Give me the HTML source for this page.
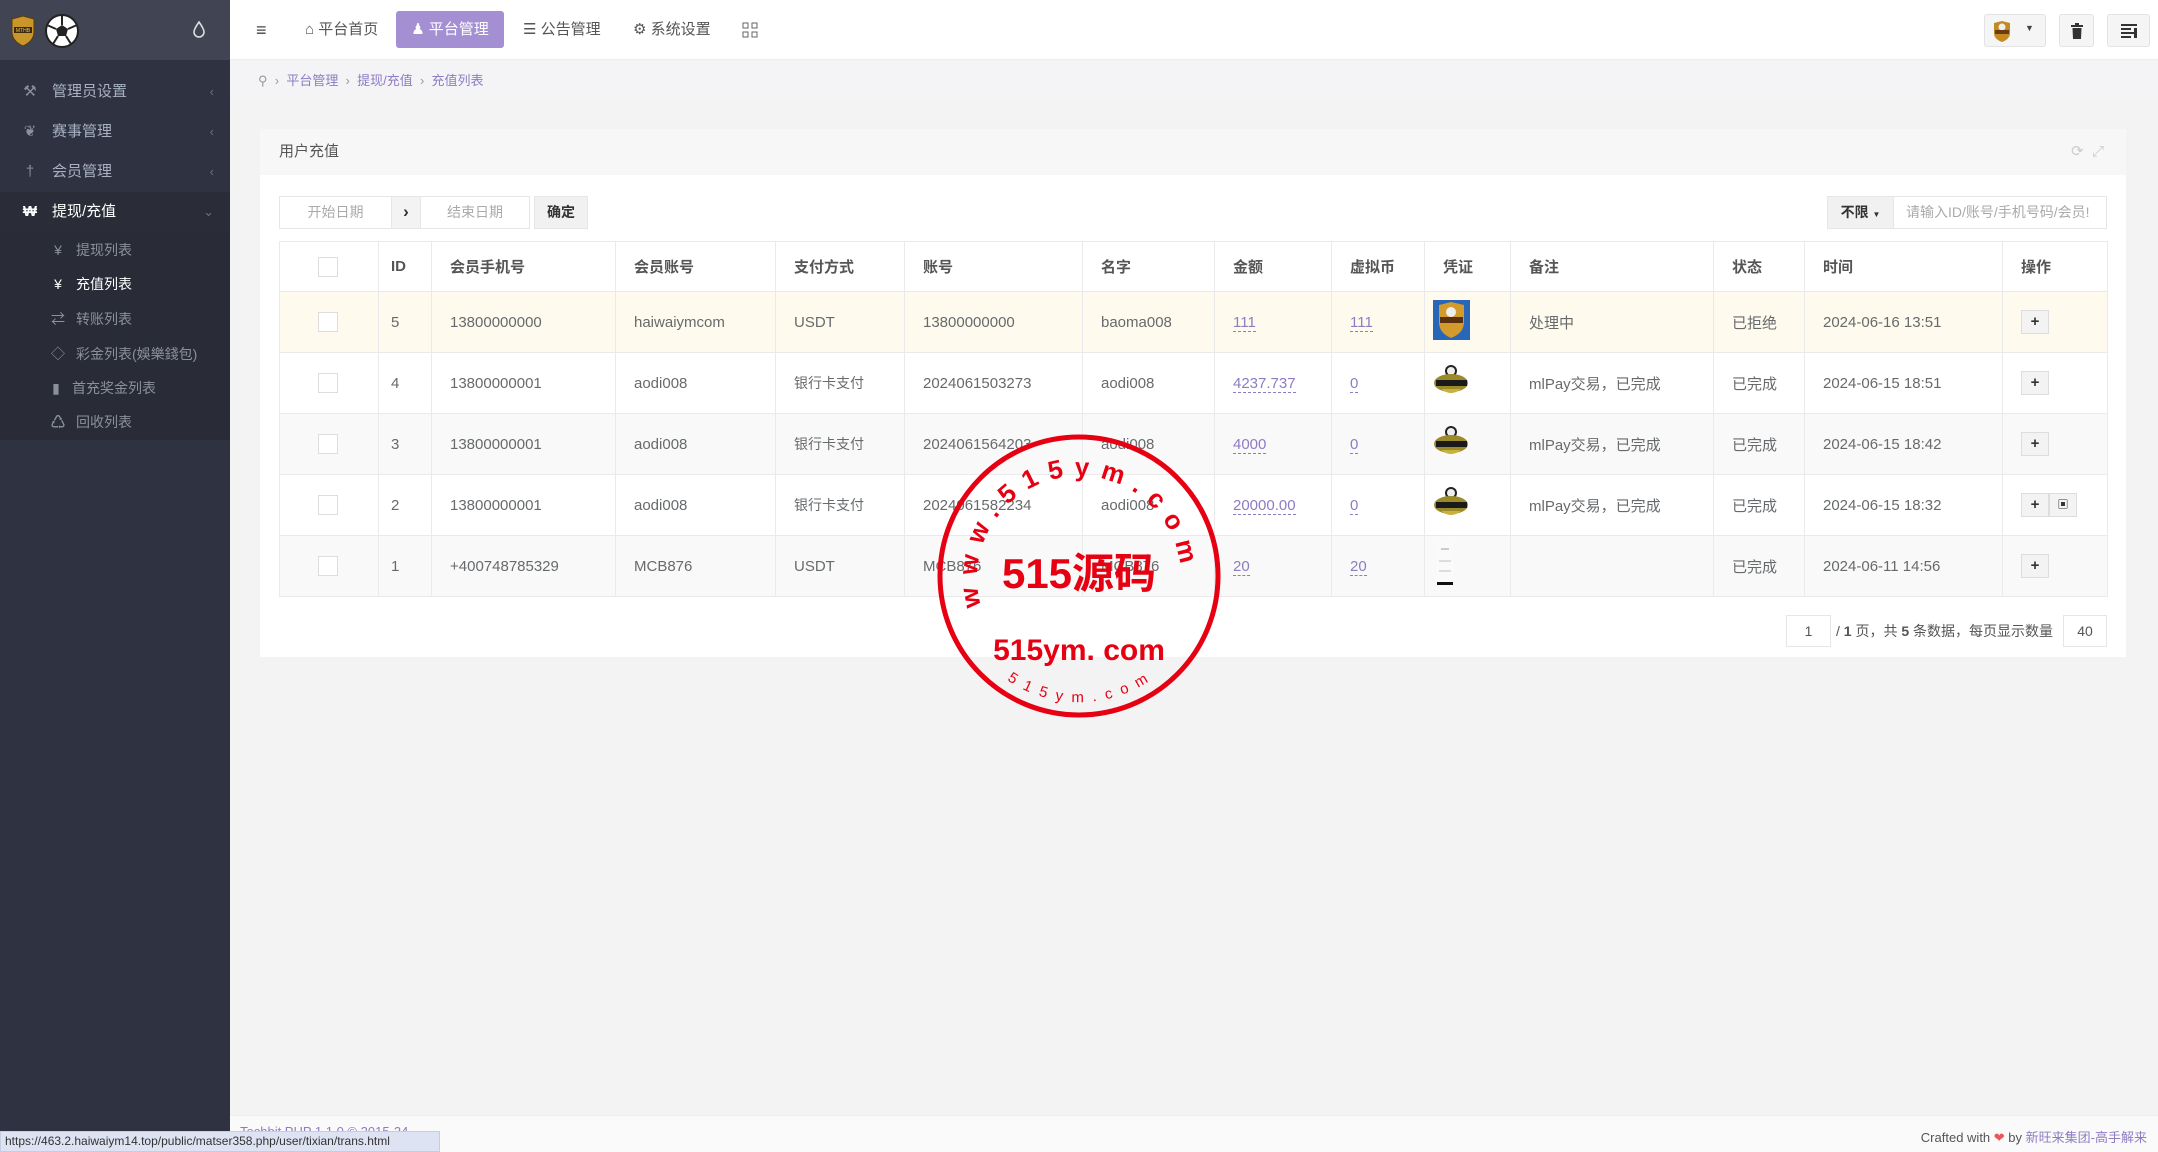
<!DOCTYPE html>
<html><head><meta charset="utf-8">
<style>
*{box-sizing:border-box;margin:0;padding:0}
body{width:2158px;height:1152px;overflow:hidden;background:#f3f3f4;font-family:"Liberation Sans","Noto Sans CJK SC",sans-serif;color:#676a6c;font-size:15px;position:relative}
.side{position:absolute;left:0;top:0;width:230px;height:1152px;background:#2f3241}
.logo{height:60px;background:#414452;position:relative}
.mi{position:absolute;left:0;width:230px;height:40px;line-height:40px;color:#a7b1c2;font-size:15px;padding-left:52px}
.mi .ic{position:absolute;left:20px;top:0;width:20px;text-align:center;color:#8a909c}
.mi .ar{position:absolute;right:16px;top:0;font-size:13px;color:#6a7080}
.sub{position:absolute;left:0;top:232px;width:230px;height:208px;background:#292b37}
.si{position:absolute;left:0;width:230px;height:34px;line-height:34px;color:#8a909c;font-size:14px;padding-left:76px}
.si .ic{position:absolute;left:50px;width:16px;text-align:center}
.top{position:absolute;left:230px;top:0;right:0;height:60px;background:#fff;border-bottom:1px solid #eee}
.nav{position:absolute;top:0;height:60px;line-height:60px;font-size:15px;color:#555}
.act{position:absolute;left:396px;top:11px;width:108px;height:37px;background:#a48fd3;color:#fff;border-radius:3px;font-size:15px;line-height:37px;text-align:center}
.rb{position:absolute;top:14px;height:33px;border:1px solid #e3e3e3;background:#f5f5f5;border-radius:3px}
.bc{position:absolute;left:258px;top:70px;font-size:13px;color:#999}
.bc a{color:#8e7cc3;text-decoration:none}
.panel{position:absolute;left:260px;top:129px;width:1866px;height:528px;background:#fff}
.ph{height:46px;background:#f7f7f7;padding-left:19px;line-height:46px;font-size:15px;color:#555}
.box{position:absolute;border:1px solid #e5e6e7;background:#fff;font-size:14px;color:#aaa;text-align:center;line-height:30px}
table{position:absolute;left:279px;top:241px;border-collapse:collapse;table-layout:fixed;width:1828px;font-size:15px}
td,th{border:1px solid #eaeaea;padding:0 0 0 18px;text-align:left;white-space:nowrap;overflow:hidden}
th{height:50px;font-weight:bold;color:#555;font-size:15px}
td{height:61px;color:#676a6c}
tr.y td{background:#fefbee}
tr.g td{background:#f9f9f9}
.cb{display:inline-block;width:20px;height:20px;border:1px solid #ddd;background:#fff;margin-left:38px;vertical-align:middle}
.lk{color:#8e7cc3;border-bottom:1px dashed #8e7cc3}
.bt{display:inline-block;width:28px;height:24px;border:1px solid #ddd;background:#f3f3f3;text-align:center;line-height:22px;font-weight:bold;color:#333;font-size:15px;vertical-align:middle}
.foot{position:absolute;left:230px;top:1115px;right:0;height:37px;background:#fafafa;border-top:1px solid #eee}
</style></head><body>
<div class="side">
 <div class="logo">
  <svg style="position:absolute;left:10px;top:16px" width="26" height="30" viewBox="0 0 26 30"><path d="M2 3 L13 0 L24 3 L24 16 Q24 25 13 30 Q2 25 2 16Z" fill="#c9962a" stroke="#5a3a10"/><rect x="4" y="11" width="18" height="6" fill="#3a2a10"/><text x="13" y="16" font-size="5" fill="#f2c84b" text-anchor="middle" font-family="Liberation Sans">MTHB</text></svg>
  <svg style="position:absolute;left:44px;top:13px" width="36" height="36" viewBox="0 0 36 36"><circle cx="18" cy="18" r="16" fill="#fff" stroke="#222" stroke-width="2"/><polygon points="18,12 24,16 22,23 14,23 12,16" fill="#222"/><path d="M18 2 L18 12 M12 16 L3 12 M24 16 L33 12 M14 23 L9 31 M22 23 L27 31" stroke="#222" stroke-width="2"/></svg>
  <svg style="position:absolute;left:193px;top:21px" width="12" height="17" viewBox="0 0 12 17"><path d="M6 1 Q1 8 1 11 A5 5 0 0 0 11 11 Q11 8 6 1Z" fill="none" stroke="#ddd" stroke-width="1.6"/></svg>
 </div>
 <div class="mi" style="top:72px"><span class="ic">&#x2692;</span>管理员设置<span class="ar">&lsaquo;</span></div>
 <div class="mi" style="top:112px"><span class="ic">&#x2766;</span>赛事管理<span class="ar">&lsaquo;</span></div>
 <div class="mi" style="top:152px"><span class="ic">&#x2020;</span>会员管理<span class="ar">&lsaquo;</span></div>
 <div class="mi" style="top:192px;background:#2a2c38;color:#fff"><span class="ic" style="color:#fff;font-weight:bold">&#x20A9;</span>提现/充值<span class="ar">&#x2304;</span></div>
 <div class="sub">
  <div class="si" style="top:1px"><span class="ic">¥</span>提现列表</div>
  <div class="si" style="top:35px;color:#fff"><span class="ic">¥</span>充值列表</div>
  <div class="si" style="top:70px"><span class="ic">&#x21C4;</span>转账列表</div>
  <div class="si" style="top:105px"><span class="ic">&#x25C7;</span>彩金列表(娛樂錢包)</div>
  <div class="si" style="top:139px;padding-left:72px"><span class="ic" style="left:48px">&#x25AE;</span>首充奖金列表</div>
  <div class="si" style="top:173px"><span class="ic">&#x267A;</span>回收列表</div>
 </div>
</div>
<div class="top">
 <div class="nav" style="left:26px;font-size:18px;color:#444">&#x2261;</div>
 <div class="nav" style="left:75px">&#x2302; 平台首页</div>
 <div class="act" style="left:166px">&#x265F; 平台管理</div>
 <div class="nav" style="left:293px">&#x2630; 公告管理</div>
 <div class="nav" style="left:403px">&#x2699; 系统设置</div>
 <svg style="position:absolute;left:512px;top:22px" width="16" height="16"><rect x="1" y="1" width="5" height="5" fill="none" stroke="#666"/><rect x="10" y="1" width="5" height="5" fill="none" stroke="#666"/><rect x="1" y="10" width="5" height="5" fill="none" stroke="#666"/><rect x="10" y="10" width="5" height="5" fill="none" stroke="#666"/></svg>
 <div class="rb" style="left:1754px;width:62px"><svg style="position:absolute;left:6px;top:5px" width="22" height="22" viewBox="0 0 22 22"><path d="M3 3 L11 1 L19 3 L19 13 Q19 19 11 22 Q3 19 3 13Z" fill="#c48a22"/><circle cx="11" cy="7" r="3.5" fill="#eee"/><rect x="4" y="10" width="14" height="4" fill="#6b3c10"/></svg><span style="position:absolute;left:40px;top:8px;font-size:9px;color:#444">&#x25BC;</span></div>
 <div class="rb" style="left:1829px;width:35px"><svg style="position:absolute;left:11px;top:8px" width="12" height="16"><rect x="0" y="2" width="12" height="2" fill="#333"/><rect x="4" y="0" width="4" height="2" fill="#333"/><path d="M1.5 5 L10.5 5 L10 16 L2 16Z" fill="#333"/></svg></div>
 <div class="rb" style="left:1877px;width:43px"><svg style="position:absolute;left:13px;top:9px" width="16" height="14"><rect x="0" y="0" width="16" height="2" fill="#333"/><rect x="0" y="4" width="10" height="2" fill="#333"/><rect x="0" y="8" width="16" height="2" fill="#333"/><rect x="0" y="12" width="10" height="2" fill="#333"/><rect x="13" y="4" width="3" height="10" fill="#333"/></svg></div>
</div>
<div style="position:absolute;left:230px;top:61px;right:0;height:38px;background:#f4f4f6"></div>
<div class="bc">&#x26B2; &nbsp;&rsaquo;&nbsp; <a>平台管理</a> &nbsp;&rsaquo;&nbsp; <a>提现/充值</a> &nbsp;&rsaquo;&nbsp; <a>充值列表</a></div>
<div class="panel">
 <div class="ph">用户充值<span style="position:absolute;right:22px;top:0;color:#ccc;font-size:15px">&#x27F3; &nbsp;&#x2922;</span></div>
</div>
<div class="box" style="left:279px;top:196px;width:113px;height:33px">开始日期</div>
<div class="box" style="left:391px;top:196px;width:30px;height:33px;background:#f3f3f3;color:#333;font-weight:bold;font-size:17px">&rsaquo;</div>
<div class="box" style="left:420px;top:196px;width:110px;height:33px">结束日期</div>
<div class="box" style="left:534px;top:196px;width:54px;height:33px;background:#f1f1f1;color:#333;font-weight:bold">确定</div>
<div class="box" style="left:1827px;top:196px;width:67px;height:33px;background:#f1f1f1;color:#333;font-weight:bold">不限 <span style="font-size:8px">&#x25BC;</span></div>
<div class="box" style="left:1893px;top:196px;width:214px;height:33px;text-align:left;padding-left:12px;color:#aaa">请输入ID/账号/手机号码/会员!</div>
<table>
<colgroup><col style="width:99px"><col style="width:53px"><col style="width:184px"><col style="width:160px"><col style="width:129px"><col style="width:178px"><col style="width:132px"><col style="width:117px"><col style="width:93px"><col style="width:86px"><col style="width:203px"><col style="width:91px"><col style="width:198px"><col style="width:105px"></colgroup>
<tr><th style="padding:0"><span class="cb"></span></th><th style="padding-left:12px">ID</th><th>会员手机号</th><th>会员账号</th><th>支付方式</th><th>账号</th><th>名字</th><th>金额</th><th>虚拟币</th><th>凭证</th><th>备注</th><th>状态</th><th>时间</th><th>操作</th></tr>
<tr class="y"><td style="padding:0"><span class="cb"></span></td><td style="padding-left:12px">5</td><td>13800000000</td><td>haiwaiymcom</td><td>USDT</td><td>13800000000</td><td>baoma008</td><td><span class="lk">111</span></td><td><span class="lk">111</span></td><td style="padding-left:8px"><svg width="37" height="40" viewBox="0 0 37 40"><rect width="37" height="40" fill="#2a66b8"/><path d="M6 5 L18 2 L31 5 L31 22 Q31 33 18 38 Q6 33 6 22Z" fill="#d39a2c"/><circle cx="18" cy="12" r="5" fill="#eee"/><rect x="7" y="17" width="23" height="6" fill="#5a3010"/></svg></td><td>处理中</td><td>已拒绝</td><td>2024-06-16 13:51</td><td><span class="bt">+</span></td></tr>
<tr><td style="padding:0"><span class="cb"></span></td><td style="padding-left:12px">4</td><td>13800000001</td><td>aodi008</td><td style="font-size:14px">银行卡支付</td><td>2024061503273</td><td>aodi008</td><td><span class="lk">4237.737</span></td><td><span class="lk">0</span></td><td style="padding-left:8px"><svg width="37" height="40" viewBox="0 0 37 40"><circle cx="18" cy="10" r="6" fill="#222"/><circle cx="18" cy="10" r="4" fill="#eee"/><ellipse cx="18" cy="22" rx="17" ry="9" fill="#9a8a2a"/><rect x="3" y="19" width="31" height="6" fill="#1a1a1a"/><path d="M8 28 Q18 36 28 28" fill="#c9b23a"/></svg></td><td>mlPay交易，已完成</td><td>已完成</td><td>2024-06-15 18:51</td><td><span class="bt">+</span></td></tr>
<tr class="g"><td style="padding:0"><span class="cb"></span></td><td style="padding-left:12px">3</td><td>13800000001</td><td>aodi008</td><td style="font-size:14px">银行卡支付</td><td>2024061564203</td><td>aodi008</td><td><span class="lk">4000</span></td><td><span class="lk">0</span></td><td style="padding-left:8px"><svg width="37" height="40" viewBox="0 0 37 40"><circle cx="18" cy="10" r="6" fill="#222"/><circle cx="18" cy="10" r="4" fill="#eee"/><ellipse cx="18" cy="22" rx="17" ry="9" fill="#9a8a2a"/><rect x="3" y="19" width="31" height="6" fill="#1a1a1a"/><path d="M8 28 Q18 36 28 28" fill="#c9b23a"/></svg></td><td>mlPay交易，已完成</td><td>已完成</td><td>2024-06-15 18:42</td><td><span class="bt">+</span></td></tr>
<tr><td style="padding:0"><span class="cb"></span></td><td style="padding-left:12px">2</td><td>13800000001</td><td>aodi008</td><td style="font-size:14px">银行卡支付</td><td>2024061582234</td><td>aodi008</td><td><span class="lk">20000.00</span></td><td><span class="lk">0</span></td><td style="padding-left:8px"><svg width="37" height="40" viewBox="0 0 37 40"><circle cx="18" cy="10" r="6" fill="#222"/><circle cx="18" cy="10" r="4" fill="#eee"/><ellipse cx="18" cy="22" rx="17" ry="9" fill="#9a8a2a"/><rect x="3" y="19" width="31" height="6" fill="#1a1a1a"/><path d="M8 28 Q18 36 28 28" fill="#c9b23a"/></svg></td><td>mlPay交易，已完成</td><td>已完成</td><td>2024-06-15 18:32</td><td><span class="bt">+</span><span class="bt" style="font-size:11px">&#x25A3;</span></td></tr>
<tr class="g"><td style="padding:0"><span class="cb"></span></td><td style="padding-left:12px">1</td><td>+400748785329</td><td>MCB876</td><td>USDT</td><td>MCB876</td><td>MCB876</td><td><span class="lk">20</span></td><td><span class="lk">20</span></td><td style="padding-left:10px"><svg width="20" height="44" viewBox="0 0 20 44"><rect x="2" y="0" width="16" height="42" fill="#fafafa"/><rect x="6" y="6" width="8" height="2" fill="#ccc"/><rect x="4" y="18" width="12" height="2" fill="#ddd"/><rect x="4" y="28" width="12" height="2" fill="#ddd"/><rect x="2" y="40" width="16" height="3" fill="#111"/></svg></td><td></td><td>已完成</td><td>2024-06-11 14:56</td><td><span class="bt">+</span></td></tr>
</table>
<div class="box" style="left:1786px;top:615px;width:45px;height:32px;color:#555;line-height:30px">1</div>
<div style="position:absolute;left:1836px;top:621px;font-size:14px;color:#555">/ <b>1</b> 页，共 <b>5</b> 条数据，每页显示数量</div>
<div class="box" style="left:2063px;top:615px;width:44px;height:32px;color:#555;line-height:30px">40</div>
<div class="foot">
 <div style="position:absolute;left:10px;top:8px;font-size:13px;color:#8e7cc3">Techbit PHP 1.1.0 © 2015-24</div>
 <div style="position:absolute;right:11px;top:11px;font-size:13px;color:#555">Crafted with <span style="color:#e55">&#x2764;</span> by <span style="color:#8e7cc3">新旺来集团-高手解来</span></div>
</div>
<div style="position:absolute;left:0;top:1131px;width:440px;height:21px;background:#dee3f3;border:1px solid #c6cde0;font-size:12px;color:#333;line-height:19px;padding-left:4px">https://463.2.haiwaiym14.top/public/matser358.php/user/tixian/trans.html</div>
<svg style="position:absolute;left:929px;top:426px" width="300" height="300" viewBox="-150 -150 300 300">
 <defs>
  <path id="arcT" d="M -100 -8 A 100 100 0 0 1 100 -8" transform="rotate(0)"/>
  <path id="arcT2" d="M -98 30 A 102 102 0 1 1 102 -2"/>
  <path id="arcB" d="M -72 104 A 128 128 0 0 0 72 104"/>
 </defs>
 <circle r="139" fill="none" stroke="#e60012" stroke-width="5"/>
 <text font-family="Liberation Sans,sans-serif" font-weight="bold" font-size="26" fill="#e60012" textLength="335" lengthAdjust="spacing"><textPath href="#arcT2" textLength="335" lengthAdjust="spacing">www.515ym.com</textPath></text>
 <text x="0" y="12" text-anchor="middle" font-family="Liberation Sans,'Noto Sans CJK SC',sans-serif" font-weight="bold" font-size="42" fill="#e60012">515源码</text>
 <text x="0" y="84" text-anchor="middle" font-family="Liberation Sans,sans-serif" font-weight="bold" font-size="30" fill="#e60012">515ym. com</text>
 <text font-family="Liberation Sans,sans-serif" font-size="15" fill="#e60012"><textPath href="#arcB" textLength="150" lengthAdjust="spacing">515ym.com</textPath></text>
</svg>
</body></html>
